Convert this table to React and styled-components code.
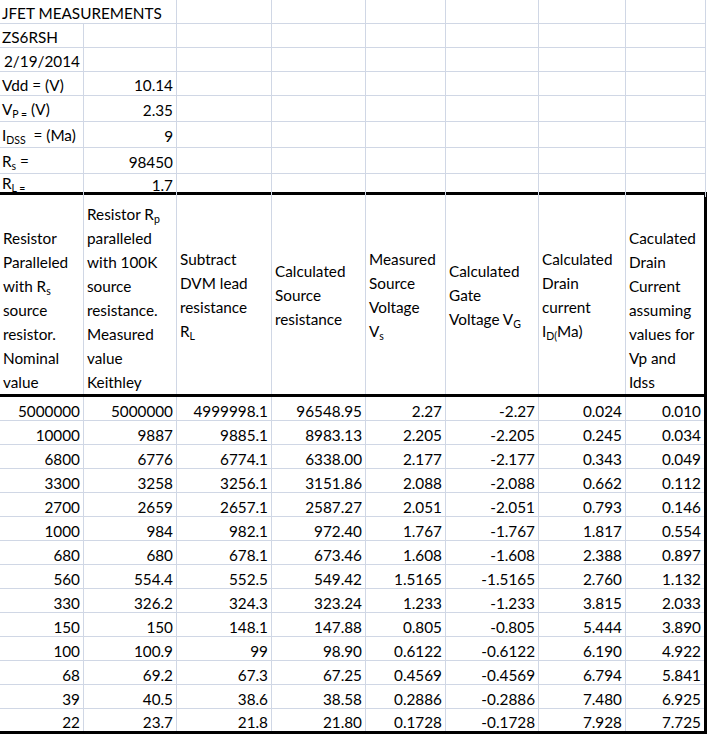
import React from 'react';
import styled, { createGlobalStyle } from 'styled-components';

const GRID = "#d0d7e5";
const INFO_COLS = "84px 93px 95px 94px 80px 93px 87px 80px";
const BOX_COLS = "84px 93px 95px 94px 80px 93px 87px 78px";

const GlobalStyle = createGlobalStyle`
    html, body {
        margin: 0;
        padding: 0;
        background: #ffffff;
    }
    body {
        font-family: "Lato", "Open Sans", sans-serif;
        font-size: 15.3px;
        color: #000000;
    }
`

const StyledSheet = styled.div`
    width: 717px;
    height: 743px;
    overflow: hidden;
    background: #ffffff;
`

const StyledInfoRow = styled.div`
    display: grid;
    grid-template-columns: ${INFO_COLS};
    height: ${props => props.$h}px;
`

const StyledInfoCell = styled.div`
    box-sizing: border-box;
    grid-column: span ${props => props.$span || 1};
    display: flex;
    align-items: flex-end;
    justify-content: ${props => props.$num ? "flex-end" : "flex-start"};
    padding: 0 3px ${props => props.$pb}px ${props => props.$indent ? 4 : 2}px;
    border-right: 1px solid ${GRID};
    border-bottom: ${props => props.$open ? "none" : `1px solid ${GRID}`};
    line-height: 18px;
    white-space: pre;
    overflow: visible;
`

const StyledBox = styled.div`
    width: 707px;
    box-sizing: border-box;
    border-top: 3px solid #000000;
    border-right: 3px solid #000000;
    border-bottom: 3px solid #000000;
`

const StyledHeadRow = styled.div`
    display: grid;
    grid-template-columns: ${BOX_COLS};
    height: 202px;
    box-sizing: border-box;
    border-bottom: 3px solid #000000;
`

const StyledHeadCell = styled.div`
    box-sizing: border-box;
    display: flex;
    flex-direction: column;
    justify-content: ${props => props.$bottom ? "flex-end" : "center"};
    padding: 0 2px 0 3px;
    border-right: ${props => props.$last ? "none" : `1px solid ${GRID}`};
    line-height: 24px;
    white-space: nowrap;
`

const StyledHeadLine = styled.div`
    height: 24px;
`

const StyledDataRow = styled.div`
    display: grid;
    grid-template-columns: ${BOX_COLS};
    height: ${props => props.$last ? 22 : 24}px;
    box-sizing: border-box;
    border-bottom: ${props => props.$last ? "none" : `1px solid ${GRID}`};
`

const StyledDataCell = styled.div`
    box-sizing: border-box;
    display: flex;
    align-items: flex-end;
    justify-content: flex-end;
    padding: 0 3px 0 2px;
    border-right: ${props => props.$last ? "none" : `1px solid ${GRID}`};
    line-height: 18px;
    white-space: nowrap;
`

const Sub = styled.span`
    font-size: 10.5px;
    line-height: 1;
    vertical-align: -3px;
`

/*
    top block of the sheet: title, call sign, date and constants
*/
const infoRows = [
    { h: 24, pb: 1, cells: [{ text: "JFET MEASUREMENTS", span: 2 }] },
    { h: 24, pb: 1, cells: [{ text: "ZS6RSH" }, {}] },
    { h: 24, pb: 1, cells: [{ text: "2/19/2014", indent: true }, {}] },
    { h: 24, pb: 1, cells: [{ text: "Vdd = (V)" }, { text: "10.14", num: true }] },
    { h: 26, pb: 2, cells: [{ text: <>V<Sub>P =</Sub>{" (V)"}</> }, { text: "2.35", num: true }] },
    { h: 26, pb: 2, cells: [{ text: <>I<Sub>DSS</Sub>{"  = (Ma)"}</> }, { text: "9", num: true }] },
    { h: 26, pb: 2, cells: [{ text: <>R<Sub>s</Sub>{" ="}</> }, { text: "98450", num: true }] },
    { h: 18, pb: 3, open: true, cells: [{ text: <>R<Sub>L =</Sub></> }, { text: "1.7", num: true }] },
];

const headers = [
    { bottom: true, lines: ["Resistor", "Paralleled", <>with R<Sub>s</Sub></>, "source", "resistor.", "Nominal", "value"] },
    { bottom: true, lines: [<>Resistor R<Sub>p</Sub></>, "paralleled", "with 100K", "source", "resistance.", "Measured", "value", "Keithley"] },
    { lines: ["Subtract", "DVM lead", "resistance", <>R<Sub>L</Sub></>] },
    { lines: ["Calculated", "Source", "resistance"] },
    { lines: ["Measured", "Source", "Voltage", <>V<Sub>s</Sub></>] },
    { lines: ["Calculated", "Gate", <>Voltage V<Sub>G</Sub></>] },
    { lines: ["Calculated", "Drain", "current", <>I<Sub>D(</Sub>Ma)</>] },
    { bottom: true, lines: ["Caculated", "Drain", "Current", "assuming", "values for", "Vp and", "Idss"] },
];

const data = [
    ["5000000", "5000000", "4999998.1", "96548.95", "2.27", "-2.27", "0.024", "0.010"],
    ["10000", "9887", "9885.1", "8983.13", "2.205", "-2.205", "0.245", "0.034"],
    ["6800", "6776", "6774.1", "6338.00", "2.177", "-2.177", "0.343", "0.049"],
    ["3300", "3258", "3256.1", "3151.86", "2.088", "-2.088", "0.662", "0.112"],
    ["2700", "2659", "2657.1", "2587.27", "2.051", "-2.051", "0.793", "0.146"],
    ["1000", "984", "982.1", "972.40", "1.767", "-1.767", "1.817", "0.554"],
    ["680", "680", "678.1", "673.46", "1.608", "-1.608", "2.388", "0.897"],
    ["560", "554.4", "552.5", "549.42", "1.5165", "-1.5165", "2.760", "1.132"],
    ["330", "326.2", "324.3", "323.24", "1.233", "-1.233", "3.815", "2.033"],
    ["150", "150", "148.1", "147.88", "0.805", "-0.805", "5.444", "3.890"],
    ["100", "100.9", "99", "98.90", "0.6122", "-0.6122", "6.190", "4.922"],
    ["68", "69.2", "67.3", "67.25", "0.4569", "-0.4569", "6.794", "5.841"],
    ["39", "40.5", "38.6", "38.58", "0.2886", "-0.2886", "7.480", "6.925"],
    ["22", "23.7", "21.8", "21.80", "0.1728", "-0.1728", "7.928", "7.725"],
];

function InfoRow({ row }) {
    /*
        fill up the row with empty cells so the grid lines run to the right edge
    */
    const used = row.cells.reduce((n, c) => n + (c.span || 1), 0);
    const cells = [...row.cells, ...Array.from({ length: 8 - used }, () => ({}))];
    return (
        <StyledInfoRow $h={row.h}>
            {cells.map((c, i) => (
                <StyledInfoCell
                    key={i}
                    $span={c.span}
                    $num={c.num}
                    $indent={c.indent}
                    $pb={row.pb}
                    $open={row.open}
                >
                    <span>{c.text}</span>
                </StyledInfoCell>
            ))}
        </StyledInfoRow>
    );
}

export default function App() {
    return (
        <StyledSheet>
            <GlobalStyle />
            {infoRows.map((row, i) => <InfoRow key={i} row={row} />)}
            <StyledBox>
                <StyledHeadRow>
                    {headers.map((h, i) => (
                        <StyledHeadCell key={i} $bottom={h.bottom} $last={i === headers.length - 1}>
                            {h.lines.map((line, j) => <StyledHeadLine key={j}>{line}</StyledHeadLine>)}
                        </StyledHeadCell>
                    ))}
                </StyledHeadRow>
                {data.map((row, i) => (
                    <StyledDataRow key={i} $last={i === data.length - 1}>
                        {row.map((v, j) => (
                            <StyledDataCell key={j} $last={j === row.length - 1}>{v}</StyledDataCell>
                        ))}
                    </StyledDataRow>
                ))}
            </StyledBox>
        </StyledSheet>
    );
}
